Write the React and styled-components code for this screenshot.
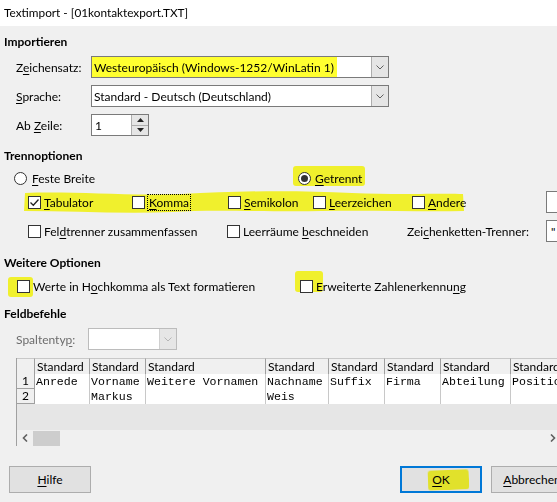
import React from 'react';
import styled, { createGlobalStyle } from 'styled-components';

const uiFont = `Lato, "Noto Sans", sans-serif`;
const monoFont = `"Liberation Mono", "DejaVu Sans Mono", monospace`;
const marker = '#ffff30';

const GlobalStyle = createGlobalStyle`
  html, body {
    margin: 0;
    padding: 0;
    background: #f0f0f0;
    overflow: hidden;
  }
  body {
    width: 557px;
    height: 502px;
    font-family: ${uiFont};
    font-size: 12px;
    color: #000;
  }
  u {
    text-decoration-thickness: 1px;
    text-underline-offset: 2px;
  }
`;

const Dialog = styled.div`
  width: 578px;
`;

const TitleBar = styled.div`
  height: 26px;
  line-height: 26px;
  padding-left: 4px;
  background: #fff;
  font-size: 11.8px;
`;

const Content = styled.div`
  padding-left: 4px;
  display: flex;
  flex-direction: column;
`;

const GroupTitle = styled.div`
  font-weight: 700;
  line-height: 16px;
  margin-top: ${p => p.$top}px;
`;

const FormRow = styled.div`
  display: flex;
  align-items: center;
  height: 22px;
  padding-left: 12px;
  margin-top: ${p => p.$top}px;
`;

const FieldLabel = styled.span`
  width: ${p => p.$w}px;
  flex: none;
  color: ${p => (p.$disabled ? '#6d6d6d' : '#000')};
`;

const ComboBox = styled.div`
  box-sizing: border-box;
  width: ${p => p.$w}px;
  height: 22px;
  display: flex;
  background: #fff;
  border: 1px solid ${p => (p.$disabled ? '#bcbcbc' : '#7a7a7a')};
`;

const ComboValue = styled.span`
  display: flex;
  align-items: center;
  padding: 0 3px 0 2px;
  background: ${p => (p.$marked ? marker : 'transparent')};
  white-space: nowrap;
`;

const Filler = styled.span`
  flex: 1;
`;

const DropButton = styled.span`
  width: 16px;
  flex: none;
  display: flex;
  align-items: center;
  justify-content: center;
  background: ${p => (p.$disabled ? '#e6e6e6' : '#e5e5e5')};
  border-left: 1px solid ${p => (p.$disabled ? '#cfcfcf' : '#adadad')};
`;

const SpinBox = styled.div`
  box-sizing: border-box;
  width: 58px;
  height: 22px;
  display: flex;
  background: #fff;
  border: 1px solid #7a7a7a;
`;

const SpinValue = styled.span`
  flex: 1;
  display: flex;
  align-items: center;
  padding-left: 3px;
`;

const SpinButtons = styled.span`
  width: 16px;
  display: flex;
  flex-direction: column;
  border-left: 1px solid #adadad;
`;

const SpinHalf = styled.span`
  flex: 1;
  display: flex;
  align-items: center;
  justify-content: center;
  background: #e5e5e5;
  & + & {
    border-top: 1px solid #adadad;
  }
`;

const OptionRow = styled.div`
  position: relative;
  display: flex;
  align-items: center;
  height: ${p => p.$h}px;
  padding-left: ${p => p.$left}px;
  margin-top: ${p => p.$top}px;
`;

const Cell = styled.label`
  position: relative;
  width: ${p => (p.$w ? `${p.$w}px` : 'auto')};
  flex: none;
  display: flex;
  align-items: center;
  gap: ${p => p.$gap ?? 3}px;
  white-space: nowrap;
`;

const Box = styled.span`
  position: relative;
  box-sizing: border-box;
  width: 13px;
  height: 13px;
  flex: none;
  background: #fff;
  border: 1px solid #333;
  display: flex;
  align-items: center;
  justify-content: center;
`;

const Round = styled(Box)`
  border-radius: 50%;
  &::after {
    content: '';
    display: ${p => (p.$on ? 'block' : 'none')};
    width: 7px;
    height: 7px;
    border-radius: 50%;
    background: #333;
  }
`;

const Focus = styled.span`
  outline: 1px dotted #000;
  outline-offset: 0;
  padding: 0 1px;
`;

const TextField = styled.span`
  box-sizing: border-box;
  width: 40px;
  height: 22px;
  flex: none;
  display: flex;
  align-items: center;
  padding-left: 4px;
  background: #fff;
  border: 1px solid #7a7a7a;
`;

const Marker = styled.span`
  position: absolute;
  left: ${p => p.$left}px;
  top: ${p => p.$top}px;
  width: ${p => p.$w}px;
  height: ${p => p.$h}px;
  background: ${marker};
  mix-blend-mode: multiply;
  border-radius: 3px;
  transform: rotate(${p => p.$tilt || 0}deg);
  pointer-events: none;
`;

const Band = styled.svg`
  position: absolute;
  left: 18px;
  top: -1px;
  mix-blend-mode: multiply;
  pointer-events: none;
`;

const Table = styled.div`
  box-sizing: border-box;
  width: 545px;
  margin: 8px 0 0 12px;
  border-left: 1px solid #a0a0a0;
  overflow: hidden;
`;

const TableRow = styled.div`
  display: flex;
  height: ${p => p.$h}px;
`;

const HeadCell = styled.span`
  box-sizing: border-box;
  width: ${p => p.$w}px;
  flex: none;
  padding-left: 2px;
  line-height: 15px;
  background: #f0f0f0;
  border-top: 1px solid #c8c8c8;
  border-right: 1px solid #a0a0a0;
  white-space: nowrap;
  overflow: hidden;
`;

const RowNumber = styled.span`
  box-sizing: border-box;
  width: 18px;
  flex: none;
  text-align: center;
  line-height: 14px;
  background: #f0f0f0;
  border-right: 1px solid #a0a0a0;
  border-bottom: 1px solid #a0a0a0;
`;

const DataCell = styled.span`
  box-sizing: border-box;
  width: ${p => p.$w}px;
  flex: none;
  padding-left: 1px;
  font-family: ${monoFont};
  font-size: 11.6px;
  line-height: 15px;
  background: #fff;
  border-right: 1px solid #c8c8c8;
  white-space: nowrap;
  overflow: hidden;
`;

const EmptyArea = styled.div`
  height: 26px;
  background: #e6e6e6;
`;

const ScrollBar = styled.div`
  height: 16px;
  display: flex;
  align-items: center;
  background: #f0f0f0;
`;

const ScrollArrow = styled.span`
  width: 16px;
  display: flex;
  align-items: center;
  justify-content: center;
`;

const Thumb = styled.span`
  width: 27px;
  height: 15px;
  background: #cdcdcd;
`;

const ButtonRow = styled.div`
  display: flex;
  gap: 9px;
  margin-top: 20px;
  padding: 0 5px;
`;

const Button = styled.button`
  position: relative;
  box-sizing: border-box;
  width: 82px;
  height: 27px;
  padding: 0;
  font: inherit;
  color: #000;
  background: #e1e1e1;
  border: ${p => (p.$default ? '2px solid #0078d7' : '1px solid #adadad')};
  margin-left: ${p => (p.$push ? 'auto' : '0')};
`;

const Chevron = ({ color = '#606060' }) => (
  <svg width="8" height="5" viewBox="0 0 8 5">
    <polyline points="0.5,0.5 4,4 7.5,0.5" fill="none" stroke={color} strokeWidth="1" />
  </svg>
);

const Tick = () => (
  <svg width="11" height="11" viewBox="0 0 11 11">
    <polyline points="1.5,5.5 4.3,8.3 9.5,2.5" fill="none" stroke="#222" strokeWidth="1.3" />
  </svg>
);

const Triangle = ({ up }) => (
  <svg width="7" height="4" viewBox="0 0 7 4">
    <polygon points={up ? '0,4 7,4 3.5,0' : '0,0 7,0 3.5,4'} fill="#222" />
  </svg>
);

const Arrow = ({ left }) => (
  <svg width="6" height="8" viewBox="0 0 6 8">
    <polyline
      points={left ? '5,0.5 1.5,4 5,7.5' : '1,0.5 4.5,4 1,7.5'}
      fill="none"
      stroke="#606060"
      strokeWidth="1.6"
    />
  </svg>
);

const Check = ({ on, children, ...rest }) => (
  <Cell {...rest}>
    <Box>{on && <Tick />}</Box>
    <span>{children}</span>
  </Cell>
);

const columns = [
  { w: 55, first: 'Anrede', second: '' },
  { w: 56, first: 'Vorname', second: 'Markus' },
  { w: 120, first: 'Weitere Vornamen', second: '' },
  { w: 63, first: 'Nachname', second: 'Weis' },
  { w: 56, first: 'Suffix', second: '' },
  { w: 56, first: 'Firma', second: '' },
  { w: 70, first: 'Abteilung', second: '' },
  { w: 80, first: 'Position', second: '' },
];

const Preview = () => (
  <Table>
    <TableRow $h={16}>
      <HeadCell $w={18} />
      {columns.map((c, i) => (
        <HeadCell key={i} $w={c.w}>Standard</HeadCell>
      ))}
    </TableRow>
    <TableRow $h={15}>
      <RowNumber>1</RowNumber>
      {columns.map((c, i) => (
        <DataCell key={i} $w={c.w}>{c.first}</DataCell>
      ))}
    </TableRow>
    <TableRow $h={15}>
      <RowNumber>2</RowNumber>
      {columns.map((c, i) => (
        <DataCell key={i} $w={c.w}>{c.second}</DataCell>
      ))}
    </TableRow>
    <EmptyArea />
    <ScrollBar>
      <ScrollArrow><Arrow left /></ScrollArrow>
      <Thumb />
      <Filler />
      <ScrollArrow><Arrow /></ScrollArrow>
    </ScrollBar>
  </Table>
);

export default function App() {
  return (
    <>
      <GlobalStyle />
      <Dialog>
        <TitleBar>Textimport - [01kontaktexport.TXT]</TitleBar>
        <Content>
          <GroupTitle $top={8}>Importieren</GroupTitle>
          <FormRow $top={6}>
            <FieldLabel $w={75}>Z<u>e</u>ichensatz:</FieldLabel>
            <ComboBox $w={298}>
              <ComboValue $marked>Westeuropäisch (Windows-1252/WinLatin 1)</ComboValue>
              <Filler />
              <DropButton><Chevron /></DropButton>
            </ComboBox>
          </FormRow>
          <FormRow $top={7}>
            <FieldLabel $w={75}><u>S</u>prache:</FieldLabel>
            <ComboBox $w={298}>
              <ComboValue>Standard - Deutsch (Deutschland)</ComboValue>
              <Filler />
              <DropButton><Chevron /></DropButton>
            </ComboBox>
          </FormRow>
          <FormRow $top={7}>
            <FieldLabel $w={75}>Ab <u>Z</u>eile:</FieldLabel>
            <SpinBox>
              <SpinValue>1</SpinValue>
              <SpinButtons>
                <SpinHalf><Triangle up /></SpinHalf>
                <SpinHalf><Triangle /></SpinHalf>
              </SpinButtons>
            </SpinBox>
          </FormRow>

          <GroupTitle $top={12}>Trennoptionen</GroupTitle>
          <OptionRow $h={16} $left={10} $top={6}>
            <Cell $w={284} $gap={5}>
              <Round />
              <span><u>F</u>este Breite</span>
            </Cell>
            <Cell $gap={4}>
              <Marker $left={-5} $top={-5} $w={72} $h={20} />
              <Round $on />
              <span><u>G</u>etrennt</span>
            </Cell>
          </OptionRow>
          <OptionRow $h={22} $left={24} $top={5}>
            <Band width="443" height="24" viewBox="0 0 443 24">
              <path
                d="M3,3 C50,1 100,6 160,4 C215,1 270,0 330,3 C380,5 420,3 441,4 L442,21 C400,22 350,20 300,21 C240,22 190,19 150,22 C100,24 50,21 2,21 Z"
                fill={marker}
              />
            </Band>
            <Check $w={104} on><u>T</u>abulator</Check>
            <Check $w={96}><Focus><u>K</u>omma</Focus></Check>
            <Check $w={85}><u>S</u>emikolon</Check>
            <Check $w={99}><u>L</u>eerzeichen</Check>
            <Check $w={134}><u>A</u>ndere</Check>
            <TextField />
          </OptionRow>
          <OptionRow $h={22} $left={24} $top={7}>
            <Check $w={199}>Fel<u>d</u>trenner zusammenfassen</Check>
            <Check $w={180}>Leerräume <u>b</u>eschneiden</Check>
            <Cell $w={139}><span>Zei<u>c</u>henketten-Trenner:</span></Cell>
            <TextField>"</TextField>
          </OptionRow>

          <GroupTitle $top={13}>Weitere Optionen</GroupTitle>
          <OptionRow $h={16} $left={13} $top={7}>
            <Cell $w={283}>
              <Marker $left={-9} $top={-2} $w={25} $h={20} />
              <Box />
              <span>Werte in H<u>o</u>chkomma als Text formatieren</span>
            </Cell>
            <Cell>
              <Marker $left={-5} $top={-8} $w={28} $h={21} />
              <Box />
              <span>Erweiterte Zahlenerkennu<u>n</u>g</span>
            </Cell>
          </OptionRow>

          <GroupTitle $top={12}>Feldbefehle</GroupTitle>
          <FormRow $top={6}>
            <FieldLabel $w={72} $disabled>Spaltenty<u>p</u>:</FieldLabel>
            <ComboBox $w={89} $disabled>
              <Filler />
              <DropButton $disabled><Chevron color="#b5b5b5" /></DropButton>
            </ComboBox>
          </FormRow>

          <Preview />

          <ButtonRow>
            <Button><u>H</u>ilfe</Button>
            <Button $push $default>
              <Marker $left={26} $top={2} $w={41} $h={20} $tilt={-2} />
              <u>O</u>K
            </Button>
            <Button><u>A</u>bbrechen</Button>
          </ButtonRow>
        </Content>
      </Dialog>
    </>
  );
}
